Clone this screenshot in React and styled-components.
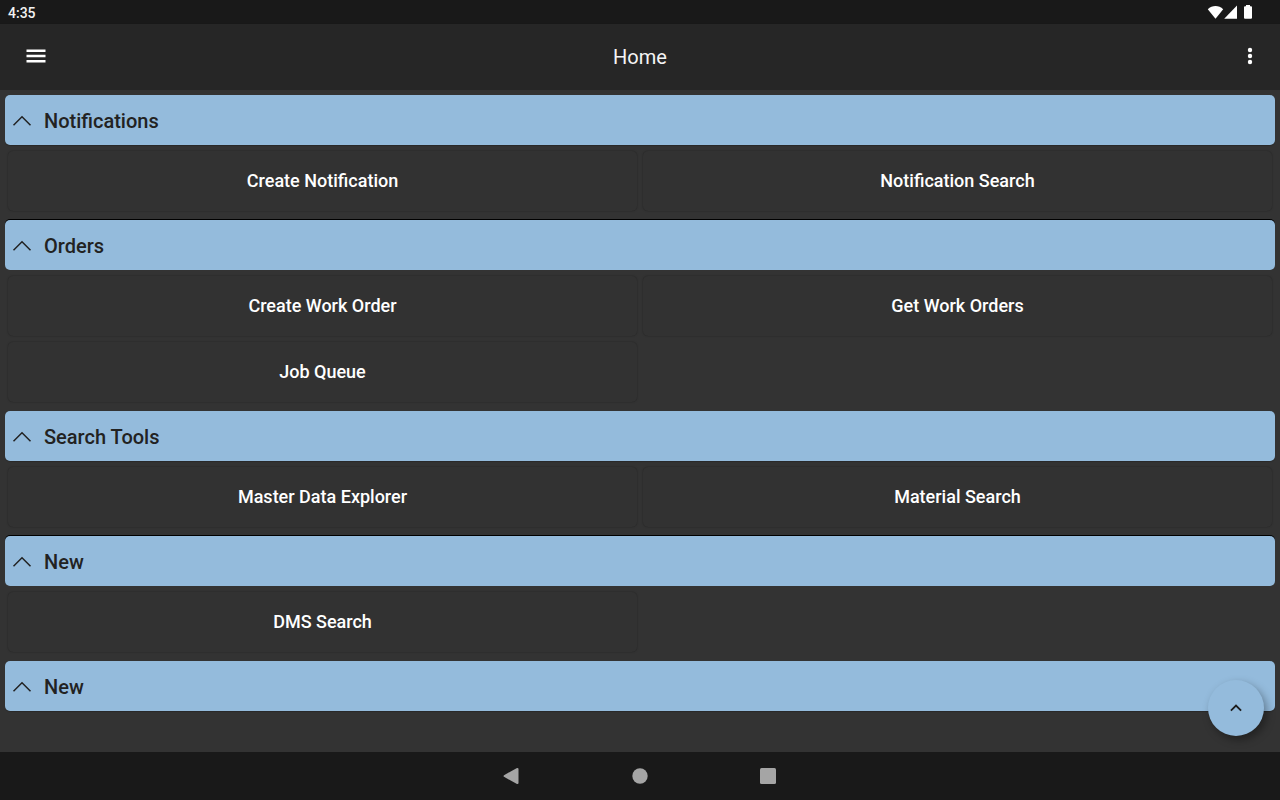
import { useRef, useState } from "react";
import styled, { createGlobalStyle } from "styled-components";

const GlobalStyle = createGlobalStyle`
    * {
        box-sizing: border-box;
    }
    body {
        margin: 0;
        background-color: #333333;
        font-family: Roboto, "Liberation Sans", sans-serif;
    }
    button {
        font-family: inherit;
        border: none;
        padding: 0;
        cursor: pointer;
    }
`;

const Screen = styled.div`
    height: 100vh;
    display: flex;
    flex-direction: column;
    color: #ffffff;
`;

const StatusBar = styled.div`
    height: 24px;
    padding: 0 27px 0 8px;
    display: flex;
    align-items: center;
    justify-content: space-between;
    background-color: #191919;
`;

const Clock = styled.time`
    font-size: 14px;
    line-height: 24px;
    font-weight: 500;
    padding-top: 2px;
    color: #f2f2f2;
`;

const StatusIcons = styled.div`
    display: flex;
    align-items: center;
`;

const AppBar = styled.header`
    height: 66px;
    padding: 0 12px;
    display: grid;
    grid-template-columns: 48px 1fr 48px;
    align-items: center;
    background-color: #262626;
    box-shadow: 0 1px 2px rgba(0, 0, 0, 0.2);
`;

const Title = styled.h1`
    margin: 0;
    font-size: 20px;
    line-height: 24px;
    font-weight: 400;
    text-align: center;
    color: #f5f5f5;
`;

const IconButton = styled.button`
    width: 36px;
    height: 36px;
    margin-bottom: 2px;
    display: flex;
    align-items: center;
    justify-content: center;
    justify-self: ${props => props.$align || "center"};
    background: none;
    color: #ffffff;
`;

const Body = styled.div`
    position: relative;
    flex: 1;
    min-height: 0;
    display: flex;
`;

const Content = styled.main`
    flex: 1;
    overflow-y: auto;
    scrollbar-width: none;
    padding: 5px;
    background-color: #333333;
`;

const SectionTitle = styled.h2`
    margin: 0;
`;

const SectionButton = styled.button`
    width: 100%;
    height: 50px;
    padding: 2px 7px 0;
    display: flex;
    align-items: center;
    gap: 12px;
    border-radius: 5px;
    background-color: #94bbdc;
    color: #222222;
    font-size: 20px;
    line-height: 24px;
    font-weight: 500;
    text-align: left;
    box-shadow: ${props => props.$outlined ? "0 -1px 0 #000000" : "0 1px 1px rgba(0, 0, 0, 0.2)"};
`;

const Arrow = styled.svg`
    transform: ${props => props.$open ? "none" : "rotate(180deg)"};
`;

const Tiles = styled.div`
    display: grid;
    grid-template-columns: 1fr 1fr;
    gap: 6px;
    padding: 6px 3px 9px;
`;

const Tile = styled.button`
    height: 60px;
    border-radius: 5px;
    background-color: #323232;
    color: #ffffff;
    font-size: 18px;
    line-height: 24px;
    font-weight: 500;
    box-shadow: 0 0 2px rgba(0, 0, 0, 0.35);
`;

const Fab = styled.button`
    position: absolute;
    right: 16px;
    bottom: 16px;
    width: 56px;
    height: 56px;
    border-radius: 50%;
    display: flex;
    align-items: center;
    justify-content: center;
    background-color: #94bbdc;
    color: #1c1c1c;
    box-shadow: 3px 4px 8px rgba(0, 0, 0, 0.35);
`;

const NavBar = styled.nav`
    height: 48px;
    display: flex;
    align-items: center;
    justify-content: center;
    gap: 80px;
    background-color: #191919;
`;

const NavButton = styled.button`
    width: 48px;
    height: 48px;
    display: flex;
    align-items: center;
    justify-content: center;
    background: none;
    color: #a5a5a5;
`;

const sections = [
    { id: 1, title: "Notifications", items: ["Create Notification", "Notification Search"] },
    { id: 2, title: "Orders", outlined: true, items: ["Create Work Order", "Get Work Orders", "Job Queue"] },
    { id: 3, title: "Search Tools", items: ["Master Data Explorer", "Material Search"] },
    { id: 4, title: "New", outlined: true, items: ["DMS Search"] },
    { id: 5, title: "New", items: [] },
];

function Section({ section }) {
    const [open, setOpen] = useState(true);

    return (
        <section>
            <SectionTitle>
                <SectionButton $outlined={section.outlined} aria-expanded={open} onClick={() => setOpen(!open)}>
                    <Arrow $open={open} width="20" height="12" viewBox="0 0 20 12" fill="none" stroke="currentColor" strokeWidth="1.5" aria-hidden="true">
                        <path d="M1.500 10.300 10 1.800l8.500 8.500" />
                    </Arrow>
                    {section.title}
                </SectionButton>
            </SectionTitle>
            {open && section.items.length > 0 && (
                <Tiles>
                    {section.items.map(item => <Tile key={item}>{item}</Tile>)}
                </Tiles>
            )}
        </section>
    )
}

function App() {
    const contentRef = useRef(null);

    const scrollToTop = () => {
        contentRef.current.scrollTo({ top: 0, behavior: "smooth" });
    }

    return (
        <>
            <GlobalStyle />
            <Screen>
                <StatusBar>
                    <Clock>4:35</Clock>
                    <StatusIcons>
                        <svg width="46" height="16" viewBox="0 0 46 16" fill="#ffffff" aria-hidden="true">
                            <path d="M0.800 5.300C5.200 0.900 11.800 0.900 16.200 5.300L8.500 14.700z" />
                            <path d="M30 1.500v13.200H17.200z" />
                            <path d="M39 1h4v1.300h1a1 1 0 0 1 1 1V13.700a1 1 0 0 1-1 1h-6a1 1 0 0 1-1-1V3.300a1 1 0 0 1 1-1h1z" />
                        </svg>
                    </StatusIcons>
                </StatusBar>
                <AppBar>
                    <IconButton aria-label="Open menu">
                        <svg width="20" height="14" viewBox="0 0 20 14" fill="currentColor">
                            <rect x="0.500" y="0.500" width="19" height="2.500" />
                            <rect x="0.500" y="5.750" width="19" height="2.500" />
                            <rect x="0.500" y="11" width="19" height="2.500" />
                        </svg>
                    </IconButton>
                    <Title>Home</Title>
                    <IconButton $align="end" aria-label="More options">
                        <svg width="6" height="18" viewBox="0 0 6 18" fill="currentColor">
                            <circle cx="3" cy="3" r="2.200" />
                            <circle cx="3" cy="9" r="2.200" />
                            <circle cx="3" cy="15" r="2.200" />
                        </svg>
                    </IconButton>
                </AppBar>
                <Body>
                    <Content ref={contentRef}>
                        {sections.map(section => <Section key={section.id} section={section} />)}
                    </Content>
                    <Fab aria-label="Scroll to top" onClick={scrollToTop}>
                        <svg width="12" height="8" viewBox="0 0 12 8" fill="none" stroke="currentColor" strokeWidth="1.800">
                            <path d="M0.900 6.700 6 1.600l5.100 5.100" />
                        </svg>
                    </Fab>
                </Body>
                <NavBar>
                    <NavButton aria-label="Back">
                        <svg width="18" height="18" viewBox="0 0 18 18" fill="currentColor">
                            <path d="M1 8.200 13.500 1.200Q15.500 0.500 15.500 2V16Q15.500 17.500 13.500 16.800L1 9.800Q0 9 1 8.200z" />
                        </svg>
                    </NavButton>
                    <NavButton aria-label="Home">
                        <svg width="16" height="16" viewBox="0 0 16 16" fill="currentColor">
                            <circle cx="8" cy="8" r="7.700" />
                        </svg>
                    </NavButton>
                    <NavButton aria-label="Recent apps">
                        <svg width="16" height="16" viewBox="0 0 16 16" fill="currentColor">
                            <rect width="16" height="16" rx="1.500" />
                        </svg>
                    </NavButton>
                </NavBar>
            </Screen>
        </>
    )
}

export default App
